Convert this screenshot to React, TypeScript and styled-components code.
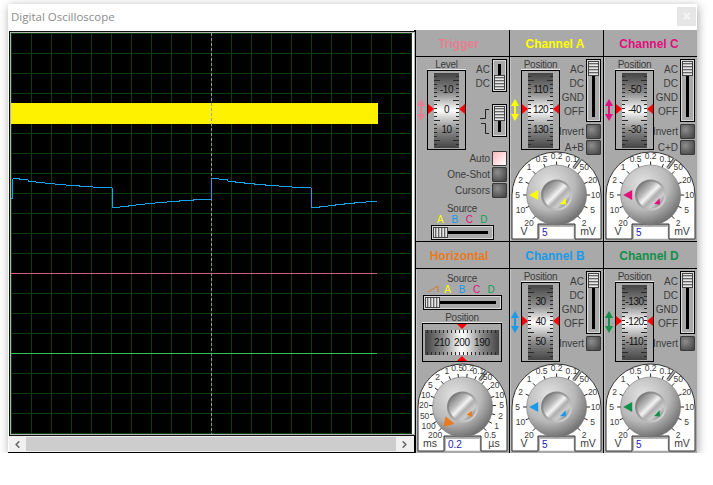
import React, { useId } from 'react';
import styled, { createGlobalStyle } from 'styled-components';
import { ChevronLeft, ChevronRight } from 'lucide-react';

const PANEL = '#a9a9a9';
const FONT = '"Liberation Sans", Arial, sans-serif';

const GlobalStyle = createGlobalStyle`
  html, body {
    margin: 0;
    background: #fff;
    font-family: ${FONT};
  }
`;

const Window = styled.div`
  margin: 4px 0 0 8px;
  width: 689px;
  height: 449px;
  background: #fff;
  box-shadow: 1px 2px 9px rgba(0, 0, 0, 0.35);
  display: flex;
  flex-direction: column;
`;
const TitleBar = styled.div`
  height: 26px;
  display: flex;
  align-items: center;
  justify-content: space-between;
  padding: 0 1px 1px 3px;
  box-sizing: border-box;
`;
const Title = styled.span`
  font: 11.5px 'Open Sans', sans-serif;
  color: #8c8c8c;
`;
const CloseButton = styled.div`
  width: 19px;
  height: 19px;
  background: #e6e6e6;
  color: #f7f7f7;
  font: bold 14px/19px ${FONT};
  text-align: center;
`;
const Content = styled.div`
  display: flex;
  height: 423px;
`;
const ScopeColumn = styled.div`
  width: 407px;
  box-sizing: border-box;
  padding: 1px 0 0 1px;
  border-right: 1px solid #000;
  border-bottom: 1px solid #000;
`;
const ScreenFrame = styled.div`
  width: 403px;
  border: 1px solid #111;
  box-shadow: inset 0 0 0 1px #b4b4b4;
  padding: 1px;
  box-sizing: content-box;
`;
const Screen = styled.svg`
  display: block;
  width: 401px;
  height: 401px;
  background: #000;
`;
const ScrollBar = styled.div`
  height: 16px;
  display: flex;
  align-items: center;
  background: #f0f0f0;
  color: #666;
`;
const ScrollButton = styled.div`
  width: 17px;
  height: 14px;
  display: flex;
  align-items: center;
  justify-content: center;
`;
const ScrollTrack = styled.div`
  width: 370px;
  height: 14px;
  background: #cdcdcd;
`;
const Controls = styled.div`
  display: grid;
  grid-template-columns: repeat(3, 93px);
  grid-template-rows: repeat(2, 211px);
  gap: 1px;
  padding-left: 1px;
  background: #000;
`;
const Panel = styled.section`
  background: ${PANEL};
  display: flex;
  flex-direction: column;
`;
const PanelHeader = styled.h2<{ $color: string; $shift: number }>`
  margin: 0;
  height: 26px;
  padding: 2px ${p => p.$shift}px 0 0;
  box-sizing: border-box;
  font: bold 12px/24px ${FONT};
  text-align: center;
  color: ${p => p.$color};
`;
const PanelBody = styled.div`
  flex: 1;
  border-top: 1px solid #000;
  padding: 2px 2px 0 1px;
  display: flex;
  flex-direction: column;
  box-shadow: inset 1px 0 0 #c4c4c4;
`;
const CenteredBody = styled(PanelBody)`
  padding-top: 5px;
  align-items: center;
`;
const TopRow = styled.div`
  height: 91px;
  display: flex;
  justify-content: space-between;
`;
const FaderColumn = styled.div`
  display: grid;
  grid-template-columns: 8px 39px;
  column-gap: 2px;
  grid-template-rows: 11px 80px;
  align-items: center;
`;
const Caption = styled.div`
  font-size: 10px;
  letter-spacing: -0.25px;
  line-height: 10px;
  color: #3c3c3c;
  text-align: center;
`;
const FaderCaption = styled(Caption)`
  grid-column: 2;
  white-space: nowrap;
`;
const FaderBox = styled.div`
  grid-column: 2;
  position: relative;
  width: 39px;
  height: 80px;
  box-sizing: border-box;
  border: 1px solid #000;
  box-shadow: 0 -1px 0 #e4e4e4;
  display: flex;
  align-items: center;
  justify-content: center;
`;
const tickBars = (dir: string, pitch: number, size: string, pos: string) =>
  `repeating-linear-gradient(${dir}, #2a2a2a 0 1px, transparent 1px ${pitch}px) ${pos} / ${size} no-repeat`;
const FaderFace = styled.div`
  width: 25px;
  height: 75px;
  display: flex;
  flex-direction: column;
  align-items: center;
  justify-content: center;
  background:
    ${tickBars('to bottom', 20, '6px 100%', 'left 0 top 7px')},
    ${tickBars('to bottom', 20, '6px 100%', 'right 0 top 7px')},
    ${tickBars('to bottom', 4, '3px 100%', 'left 0 top 3px')},
    ${tickBars('to bottom', 4, '3px 100%', 'right 0 top 3px')},
    linear-gradient(to bottom, #444 0%, #8a8a8a 26%, #d8d8d8 42%, #fff 50%, #d8d8d8 58%, #8a8a8a 76%, #444 100%);
`;
const FaderTick = styled.div`
  height: 20px;
  font-size: 10px;
  letter-spacing: -0.5px;
  line-height: 20px;
  color: #111;
`;
const Marker = styled.i<{ $side: 'left' | 'right' | 'top' | 'bottom' }>`
  position: absolute;
  background: #f00;
  ${p =>
    p.$side === 'left'
      ? 'left: 0; top: 33px; width: 6px; height: 10px; clip-path: polygon(0 0, 100% 50%, 0 100%);'
      : p.$side === 'right'
        ? 'right: 0; top: 33px; width: 6px; height: 10px; clip-path: polygon(100% 0, 0 50%, 100% 100%);'
        : p.$side === 'top'
          ? 'top: 0; left: 34px; width: 10px; height: 5px; clip-path: polygon(0 0, 100% 0, 50% 100%);'
          : 'bottom: 0; left: 34px; width: 10px; height: 5px; clip-path: polygon(50% 0, 100% 100%, 0 100%);'}
`;
const SideColumn = styled.div`
  width: 41px;
  display: flex;
  flex-direction: column;
  align-items: flex-end;
`;
const SwitchRow = styled.div<{ $gap?: number }>`
  display: flex;
  gap: 2px;
  margin-top: ${p => p.$gap ?? 0}px;
`;
const SwitchLabels = styled.div`
  width: 24px;
  padding-top: 4px;
  font-size: 10px;
  line-height: 14px;
  color: #3c3c3c;
  text-align: right;
`;
const EdgeIcon = styled.svg`
  width: 10px;
  height: 27px;
  margin-top: 4px;
`;
const Slider = styled.div<{ $vertical?: boolean; $end?: boolean; $length: number }>`
  position: relative;
  box-sizing: border-box;
  width: ${p => (p.$vertical ? '15px' : `${p.$length}px`)};
  height: ${p => (p.$vertical ? `${p.$length}px` : '15px')};
  border: 1px solid #000;
  box-shadow: inset 0 0 0 1px #d8d8d8;
  padding: 1px;
  display: flex;
  flex-direction: ${p => (p.$vertical ? 'column' : 'row')};
  justify-content: ${p => (p.$end ? 'flex-end' : 'flex-start')};
  &::before {
    content: '';
    position: absolute;
    background: #000;
    ${p =>
      p.$vertical
        ? 'left: 5px; width: 3px; top: 4px; bottom: 4px;'
        : 'top: 5px; height: 3px; left: 4px; right: 5px;'}
  }
`;
const SliderThumb = styled.div<{ $vertical?: boolean }>`
  position: relative;
  box-sizing: border-box;
  width: ${p => (p.$vertical ? '11px' : '15px')};
  height: ${p => (p.$vertical ? '15px' : '11px')};
  border: 1px solid #444;
  background: repeating-linear-gradient(
    ${p => (p.$vertical ? 'to bottom' : 'to right')},
    #e8e8e8 0 1px,
    #666 1px 2px,
    #bcbcbc 2px 3px
  );
`;
const ButtonRow = styled.div`
  display: flex;
  align-items: center;
  justify-content: flex-end;
  gap: 2px;
  height: 15px;
  margin-top: 1px;
  font-size: 10px;
  color: #3c3c3c;
  white-space: nowrap;
`;
const InvertRow = styled(ButtonRow)`
  margin-top: 2px;
`;
const RoundButton = styled.div<{ $lit?: boolean }>`
  width: 15px;
  height: 15px;
  box-sizing: border-box;
  border: 1px solid #3a3a3a;
  border-radius: 1px;
  background: ${p =>
    p.$lit
      ? 'linear-gradient(135deg, #fbb8bd, #fff)'
      : 'radial-gradient(circle at 35% 35%, #8e8e8e, #4a4a4a 85%)'};
`;
const SourceBlock = styled.div`
  display: flex;
  flex-direction: column;
  align-items: center;
  margin-top: 6px;
`;
const SourceLetters = styled.div`
  display: flex;
  height: 11px;
  justify-content: center;
`;
const SourceLetter = styled.span<{ $color: string }>`
  width: 14.5px;
  text-align: center;
  font-size: 10px;
  line-height: 11px;
  color: ${p => p.$color};
`;
const RampIcon = styled.svg`
  width: 14.5px;
  height: 10px;
`;
const PositionCaption = styled(Caption)`
  margin-top: 3px;
`;
const SweepBox = styled.div`
  position: relative;
  width: 80px;
  height: 39px;
  box-sizing: border-box;
  border: 1px solid #000;
  box-shadow: 0 -1px 0 #e4e4e4;
  display: flex;
  align-items: center;
  justify-content: center;
`;
const SweepFace = styled.div`
  width: 74px;
  height: 25px;
  display: flex;
  align-items: center;
  justify-content: center;
  background:
    ${tickBars('to right', 4, '100% 3px', 'left 2px top 0')},
    ${tickBars('to right', 4, '100% 3px', 'left 2px bottom 0')},
    linear-gradient(to right, #444 0%, #8a8a8a 24%, #e0e0e0 42%, #fff 50%, #e0e0e0 58%, #8a8a8a 76%, #444 100%);
`;
const SweepTick = styled.span`
  width: 20px;
  text-align: center;
  font-size: 10px;
  letter-spacing: -0.3px;
  color: #111;
`;
const DialWrap = styled.div`
  position: relative;
  align-self: flex-start;
  margin-left: -1px;
  width: 92px;
  height: 90px;
`;
const DialCanvas = styled.svg`
  display: block;
  width: 92px;
  height: 90px;
  font-family: ${FONT};
`;
const DialValue = styled.div`
  position: absolute;
  left: 29px;
  top: 76px;
  width: 35px;
  height: 13px;
  box-sizing: border-box;
  padding-left: 2px;
  background: #fff;
  border: 1px solid #b8b8b8;
  border-right-color: #e8e8e8;
  border-bottom-color: #e8e8e8;
  font-size: 10px;
  line-height: 12px;
  color: #2222b0;
`;

type Pt = [number, number];

const polar = (r: number, deg: number): Pt => {
  const a = (deg * Math.PI) / 180;
  return [46.6 + r * Math.sin(a), 45 - r * Math.cos(a)];
};

const CHANNEL_SCALE = ['20', '10', '5', '2', '1', '0.5', '0.2', '0.1', '50', '20', '10', '5', '2'];
const SWEEP_SCALE = ['200', '100', '50', '20', '10', '5', '2', '1', '0.5', '0.2', '0.1', '50', '20', '10', '5', '2', '1', '0.5'];

const Dial: React.FC<{
  color: string;
  scale: string[];
  pointer: string;
  small: string;
  left: string;
  right: string;
  value: string;
}> = ({ color, scale, pointer, small, left, right, value }) => {
  const id = useId();
  const step = 270 / (scale.length - 1);
  return (
    <DialWrap>
      <DialCanvas viewBox="0 0 92 90">
        <defs>
          <radialGradient id={`${id}k`} cx="38%" cy="32%" r="78%">
            <stop offset="0" stopColor="#e4e4e4" />
            <stop offset="0.55" stopColor="#b8b8b8" />
            <stop offset="1" stopColor="#5c5c5c" />
          </radialGradient>
          <linearGradient id={`${id}r`} x1="0" y1="0" x2="1" y2="1">
            <stop offset="0" stopColor="#666" />
            <stop offset="1" stopColor="#e4e4e4" />
          </linearGradient>
          <linearGradient id={`${id}c`} x1="0.12" y1="0.12" x2="0.88" y2="0.88">
            <stop offset="0" stopColor="#808080" />
            <stop offset="0.3" stopColor="#bcbcbc" />
            <stop offset="0.47" stopColor="#f4f4f4" />
            <stop offset="0.62" stopColor="#aeaeae" />
            <stop offset="0.8" stopColor="#cecece" />
            <stop offset="1" stopColor="#8a8a8a" />
          </linearGradient>
        </defs>
        <path
          d="M2 89V45A44.5 43 0 0 1 91 45V89H65V74H28V89Z"
          fill="#fff"
          stroke="#333"
        />
        <path d="M63.6 18.3L70.5 9" stroke="#333" strokeWidth="3.2" />
        <path d="M63.2 18.8L71 8.4" stroke={PANEL} strokeWidth="1.8" />
        {scale.map((label, i) => {
          const deg = -135 + i * step;
          const [x1, y1] = polar(29, deg);
          const [x2, y2] = polar(33.5, deg);
          const [tx, ty] = polar(39, deg);
          return (
            <g key={i}>
              <line x1={x1} y1={y1} x2={x2} y2={y2} stroke="#222" />
              <text x={tx} y={ty + 3} fontSize="8.5" textAnchor="middle" fill="#3c3c3c">
                {label}
              </text>
            </g>
          );
        })}
        <circle cx="46.6" cy="45" r="30" fill={`url(#${id}k)`} stroke="#777" strokeWidth="0.6" />
        <circle cx="46.6" cy="45" r="15.6" fill={`url(#${id}r)`} />
        <circle cx="46.6" cy="45" r="13.4" fill={`url(#${id}c)`} />
        <g transform="translate(46.6 45)" fill={color}>
          <polygon points={pointer} />
          <polygon points={small} />
        </g>
        <text x="14" y="85" fontSize="10.5" textAnchor="middle" fill="#3c3c3c">
          {left}
        </text>
        <text x="78" y="85" fontSize="10.5" textAnchor="middle" fill="#3c3c3c">
          {right}
        </text>
      </DialCanvas>
      <DialValue>{value}</DialValue>
    </DialWrap>
  );
};

const ArrowIcon = styled.svg`
  grid-column: 1;
  grid-row: 2;
  width: 8px;
  height: 22px;
`;

const DoubleArrow: React.FC<{ color: string }> = ({ color }) => (
  <ArrowIcon viewBox="0 0 8 22">
    <path d="M4 0L8 7H5V15H8L4 22L0 15H3V7H0Z" fill={color} />
  </ArrowIcon>
);

const Fader: React.FC<{ caption: string; arrow: string; ticks: string[] }> = ({ caption, arrow, ticks }) => (
  <FaderColumn>
    <FaderCaption>{caption}</FaderCaption>
    <DoubleArrow color={arrow} />
    <FaderBox>
      <FaderFace>
        {ticks.map(t => (
          <FaderTick key={t}>{t}</FaderTick>
        ))}
      </FaderFace>
      <Marker $side="left" />
      <Marker $side="right" />
    </FaderBox>
  </FaderColumn>
);

const Channel: React.FC<{
  name: string;
  color: string;
  ticks: string[];
  sum?: string;
}> = ({ name, color, ticks, sum }) => (
  <Panel>
    <PanelHeader $color={color} $shift={3}>{name}</PanelHeader>
    <PanelBody>
      <TopRow>
        <Fader caption="Position" arrow={color} ticks={ticks} />
        <SideColumn>
          <SwitchRow>
            <SwitchLabels>
              AC
              <br />
              DC
              <br />
              GND
              <br />
              OFF
            </SwitchLabels>
            <Slider $vertical $length={63}>
              <SliderThumb $vertical />
            </Slider>
          </SwitchRow>
          <InvertRow>
            Invert
            <RoundButton />
          </InvertRow>
          {sum && (
            <ButtonRow>
              {sum}
              <RoundButton />
            </ButtonRow>
          )}
        </SideColumn>
      </TopRow>
      <Dial
        color={color}
        scale={CHANNEL_SCALE}
        pointer="-27.4,0 -18.4,-5 -18.4,5"
        small="3.5,9 9,3.3 9.5,9.5"
        left="V"
        right="mV"
        value="5"
      />
    </PanelBody>
  </Panel>
);

const Letters: { l: string; c: string }[] = [
  { l: 'A', c: '#ffff00' },
  { l: 'B', c: '#1a9ae8' },
  { l: 'C', c: '#e0107f' },
  { l: 'D', c: '#10a050' },
];

const Trigger = () => (
  <Panel>
    <PanelHeader $color="#e58092" $shift={8}>Trigger</PanelHeader>
    <PanelBody>
      <TopRow>
        <Fader caption="Level" arrow="#e58092" ticks={['-10', '0', '10']} />
        <SideColumn>
          <SwitchRow>
            <SwitchLabels>
              AC
              <br />
              DC
            </SwitchLabels>
            <Slider $vertical $end $length={33}>
              <SliderThumb $vertical />
            </Slider>
          </SwitchRow>
          <SwitchRow $gap={12}>
            <EdgeIcon viewBox="0 0 10 27">
              <path d="M0 10.5H5.5V1.5H9M1 15.5H5.5V25.5H9" fill="none" stroke="#222" />
            </EdgeIcon>
            <Slider $vertical $length={33}>
              <SliderThumb $vertical />
            </Slider>
          </SwitchRow>
        </SideColumn>
      </TopRow>
      <ButtonRow>
        Auto
        <RoundButton $lit />
      </ButtonRow>
      <ButtonRow>
        One-Shot
        <RoundButton />
      </ButtonRow>
      <ButtonRow>
        Cursors
        <RoundButton />
      </ButtonRow>
      <SourceBlock>
        <Caption>Source</Caption>
        <SourceLetters>
          {Letters.map(s => (
            <SourceLetter key={s.l} $color={s.c}>
              {s.l}
            </SourceLetter>
          ))}
        </SourceLetters>
        <Slider $length={63}>
          <SliderThumb />
        </Slider>
      </SourceBlock>
    </PanelBody>
  </Panel>
);

const Horizontal = () => (
  <Panel>
    <PanelHeader $color="#e87a20" $shift={7}>Horizontal</PanelHeader>
    <CenteredBody>
      <Caption>Source</Caption>
      <SourceLetters>
        <RampIcon viewBox="0 0 14.5 10">
          <path d="M2 8L12 2V8" fill="none" stroke="#d8782c" />
        </RampIcon>
        {Letters.map(s => (
          <SourceLetter key={s.l} $color={s.c}>
            {s.l}
          </SourceLetter>
        ))}
      </SourceLetters>
      <Slider $length={79}>
        <SliderThumb />
      </Slider>
      <PositionCaption>Position</PositionCaption>
      <SweepBox>
        <SweepFace>
          <SweepTick>210</SweepTick>
          <SweepTick>200</SweepTick>
          <SweepTick>190</SweepTick>
        </SweepFace>
        <Marker $side="top" />
        <Marker $side="bottom" />
      </SweepBox>
      <Dial
        color="#e87a20"
        scale={SWEEP_SCALE}
        pointer="-17,9.3 -19.3,20 -8.3,16.7"
        small="4,7.7 9,3.7 10,10"
        left="ms"
        right="µs"
        value="0.2"
      />
    </CenteredBody>
  </Panel>
);

// trace read off the reference, in 3x pixels of the window
const FALL: Pt[] = [[60, 537], [85, 540], [108, 544], [135, 547], [165, 550], [198, 553], [238, 556], [278, 559], [335, 562]];
const RISE: Pt[] = [[360, 624], [385, 621], [408, 618], [435, 615], [465, 612], [500, 609], [538, 606], [580, 603], [632, 600]];
const period = (dx: number, end: number) =>
  [
    ...FALL.map(([x, y]) => `V${y}H${x + dx}`),
    `V565H${338 + dx}`,
    ...RISE.filter(([x]) => x + dx <= end).map(([x, y]) => `V${y}H${x + dx}`),
  ].join('');
const TRACE = `M33 595H38${period(0, 9999)}V597H636${period(598, 1100)}V606H1130`;

const Scope = () => (
  <ScreenFrame>
    <Screen viewBox="0 0 401 401">
      {Array.from({ length: 21 }, (_, i) => (
        <g key={i} stroke="#0c3d0c">
          <line x1={i * 20 + 0.5} y1="0" x2={i * 20 + 0.5} y2="401" />
          <line x1="0" y1={i * 20 + 0.5} x2="401" y2={i * 20 + 0.5} />
        </g>
      ))}
      <rect x="0" y="70" width="367" height="21" fill="#fff200" />
      <line x1="200.5" y1="0" x2="200.5" y2="401" stroke="#9a9a9a" strokeDasharray="3 2" />
      <line x1="0" y1="240.5" x2="366" y2="240.5" stroke="#cf6080" />
      <line x1="0" y1="320.5" x2="366" y2="320.5" stroke="#2fc455" />
      <g transform="translate(-11 -33) scale(0.33333)">
        <path d={TRACE} fill="none" stroke="#18a4ec" strokeWidth="3" shapeRendering="crispEdges" />
      </g>
    </Screen>
  </ScreenFrame>
);

export default function App() {
  return (
    <>
      <GlobalStyle />
      <Window>
        <TitleBar>
          <Title>Digital Oscilloscope</Title>
          <CloseButton>×</CloseButton>
        </TitleBar>
        <Content>
          <ScopeColumn>
            <Scope />
            <ScrollBar>
              <ScrollButton>
                <ChevronLeft size={11} strokeWidth={3.5} />
              </ScrollButton>
              <ScrollTrack />
              <ScrollButton>
                <ChevronRight size={11} strokeWidth={3.5} />
              </ScrollButton>
            </ScrollBar>
          </ScopeColumn>
          <Controls>
            <Trigger />
            <Channel name="Channel A" color="#ffff00" ticks={['110', '120', '130']} sum="A+B" />
            <Channel name="Channel C" color="#e0107f" ticks={['-50', '-40', '-30']} sum="C+D" />
            <Horizontal />
            <Channel name="Channel B" color="#1a9ae8" ticks={['30', '40', '50']} />
            <Channel name="Channel D" color="#109048" ticks={['-130', '-120', '-110']} />
          </Controls>
        </Content>
      </Window>
    </>
  );
}
